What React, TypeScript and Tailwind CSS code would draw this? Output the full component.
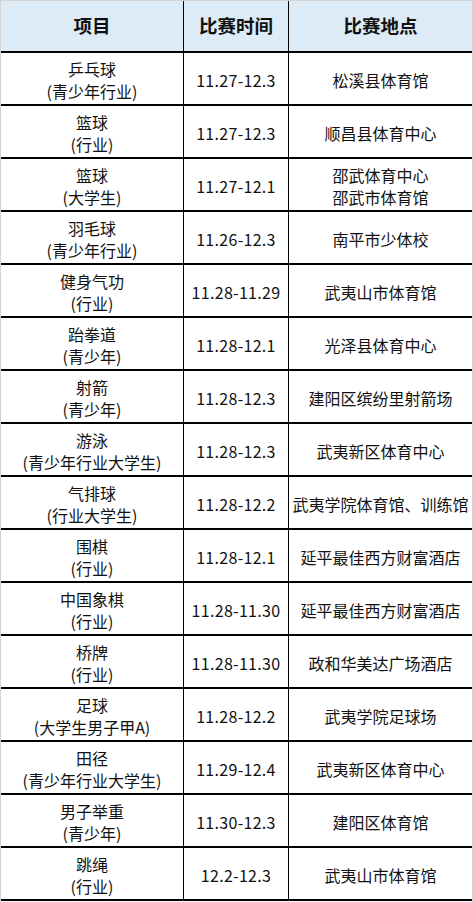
import React from "react";

const rows: [string, string, string, string[]][] = [
  ["乒乓球", "(青少年行业)", "11.27-12.3", ["松溪县体育馆"]],
  ["篮球", "(行业)", "11.27-12.3", ["顺昌县体育中心"]],
  ["篮球", "(大学生)", "11.27-12.1", ["邵武体育中心", "邵武市体育馆"]],
  ["羽毛球", "(青少年行业)", "11.26-12.3", ["南平市少体校"]],
  ["健身气功", "(行业)", "11.28-11.29", ["武夷山市体育馆"]],
  ["跆拳道", "(青少年)", "11.28-12.1", ["光泽县体育中心"]],
  ["射箭", "(青少年)", "11.28-12.3", ["建阳区缤纷里射箭场"]],
  ["游泳", "(青少年行业大学生)", "11.28-12.3", ["武夷新区体育中心"]],
  ["气排球", "(行业大学生)", "11.28-12.2", ["武夷学院体育馆、训练馆"]],
  ["围棋", "(行业)", "11.28-12.1", ["延平最佳西方财富酒店"]],
  ["中国象棋", "(行业)", "11.28-11.30", ["延平最佳西方财富酒店"]],
  ["桥牌", "(行业)", "11.28-11.30", ["政和华美达广场酒店"]],
  ["足球", "(大学生男子甲A)", "11.28-12.2", ["武夷学院足球场"]],
  ["田径", "(青少年行业大学生)", "11.29-12.4", ["武夷新区体育中心"]],
  ["男子举重", "(青少年)", "11.30-12.3", ["建阳区体育馆"]],
  ["跳绳", "(行业)", "12.2-12.3", ["武夷山市体育馆"]],
];

const font = { fontFamily: '"Noto Sans CJK SC", "Noto Sans", sans-serif' };

export default function App() {
  return (
    <div
      className="w-[474px] h-[902px] bg-white border-l border-t border-r-2 border-[#d4d4d4] text-[#111]"
      style={font}
    >
      <div className="grid grid-cols-[183px_105px_1fr] h-[52px] bg-[#ddebf7] border-b-2 border-black font-bold text-[18.5px]">
        <div className="flex items-center justify-center border-r-[1.5px] border-black">项目</div>
        <div className="flex items-center justify-center border-r-[1.5px] border-black">比赛时间</div>
        <div className="flex items-center justify-center">比赛地点</div>
      </div>
      {rows.map((r, i) => (
        <div
          key={i}
          className="grid grid-cols-[183px_105px_1fr] h-[53px] border-b-2 border-black"
        >
          <div className="flex flex-col items-center justify-center border-r-[1.5px] border-black text-[16px] leading-[22px] pt-[2px]">
            <span>{r[0]}</span>
            <span>{r[1]}</span>
          </div>
          <div className="flex items-center justify-center border-r-[1.5px] border-black text-[16px] tracking-[0.3px] pt-[2px]">
            {r[2]}
          </div>
          <div className="flex flex-col items-center justify-center text-[16px] leading-[22px] pt-[2px]">
            {r[3].map((t, j) => (
              <span key={j}>{t}</span>
            ))}
          </div>
        </div>
      ))}
    </div>
  );
}
